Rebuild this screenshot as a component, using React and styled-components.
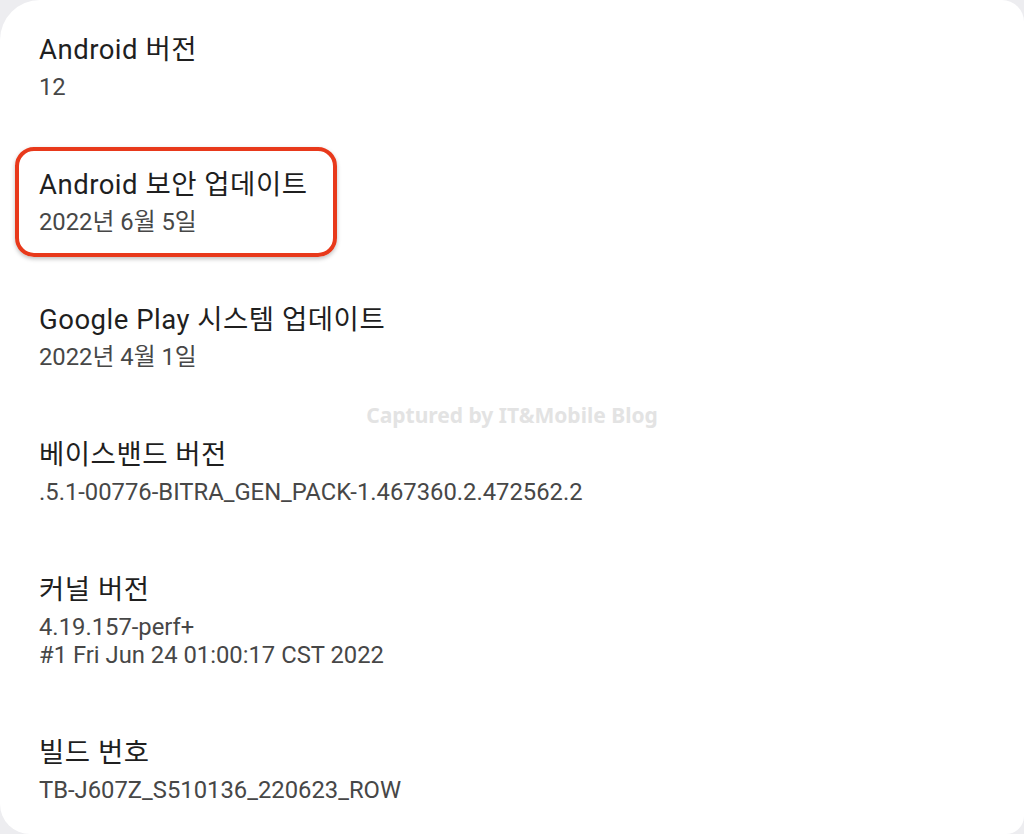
import React from 'react';
import styled, { createGlobalStyle } from 'styled-components';

const GlobalStyle = createGlobalStyle`
	html, body {
		margin: 0;
		padding: 0;
		background: #ededf0;
	}
	body {
		font-family: Roboto, "Noto Sans CJK KR", sans-serif;
	}
`;

const Card = styled.div`
	position: relative;
	width: 1024px;
	height: 834px;
	box-sizing: border-box;
	background: #ffffff;
	border-radius: 40px 22px 18px 30px;
	overflow: hidden;
`;

const List = styled.ul`
	list-style: none;
	margin: 0;
	padding: 0 39px;
	display: flex;
	flex-direction: column;
`;

const Item = styled.li`
	padding: 32px 0 34px;
	display: flex;
	flex-direction: column;
`;

const Title = styled.div`
	font-size: 27.5px;
	line-height: 36px;
	letter-spacing: 0.5px;
	color: #1f1f1f;
	margin-bottom: 5px;
`;

const Summary = styled.div`
	font-size: 23.8px;
	line-height: 28px;
	color: #474747;
`;

const Highlight = styled.div`
	position: absolute;
	left: 15px;
	top: 147px;
	width: 322px;
	height: 110px;
	box-sizing: border-box;
	border: 4px solid #e8391b;
	border-radius: 19px;
	box-shadow: 0 2px 4px rgba(0, 0, 0, 0.25);
	pointer-events: none;
`;

const Watermark = styled.div`
	position: absolute;
	left: 0;
	right: 0;
	top: 401px;
	text-align: center;
	font-family: "Noto Sans", sans-serif;
	font-weight: 700;
	font-size: 21px;
	color: #e3e3e3;
`;

const items = [
	{ title: 'Android 버전', lines: ['12'] },
	{ title: 'Android 보안 업데이트', lines: ['2022년 6월 5일'] },
	{ title: 'Google Play 시스템 업데이트', lines: ['2022년 4월 1일'] },
	{ title: '베이스밴드 버전', lines: ['.5.1-00776-BITRA_GEN_PACK-1.467360.2.472562.2'] },
	{ title: '커널 버전', lines: ['4.19.157-perf+', '#1 Fri Jun 24 01:00:17 CST 2022'] },
	{ title: '빌드 번호', lines: ['TB-J607Z_S510136_220623_ROW'] },
];

const App = () => {
	return (
		<>
			<GlobalStyle />
			<Card>
				<List>
					{items.map((item) => (
						<Item key={item.title}>
							<Title>{item.title}</Title>
							{item.lines.map((line) => (
								<Summary key={line}>{line}</Summary>
							))}
						</Item>
					))}
				</List>
				<Watermark>Captured by IT&amp;Mobile Blog</Watermark>
				<Highlight />
			</Card>
		</>
	);
};

export default App;
